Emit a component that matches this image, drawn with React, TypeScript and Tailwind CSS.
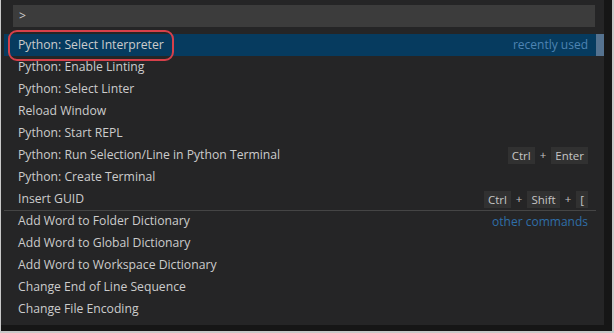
import React from "react";

type Item = { label: string; keys?: string[] };

const top: Item[] = [
  { label: "Python: Enable Linting" },
  { label: "Python: Select Linter" },
  { label: "Reload Window" },
  { label: "Python: Start REPL" },
  { label: "Python: Run Selection/Line in Python Terminal", keys: ["Ctrl", "Enter"] },
  { label: "Python: Create Terminal" },
  { label: "Insert GUID", keys: ["Ctrl", "Shift", "["] },
];

const rest: Item[] = [
  { label: "Add Word to Global Dictionary" },
  { label: "Add Word to Workspace Dictionary" },
  { label: "Change End of Line Sequence" },
  { label: "Change File Encoding" },
];

const Keys = ({ keys }: { keys: string[] }) => (
  <div className="flex items-center gap-[5px] text-[11.5px] text-[#c5c5c5]">
    {keys.map((k, i) => (
      <React.Fragment key={k}>
        {i > 0 && <span>+</span>}
        <span className="bg-[#313131] px-[4px] leading-[17px]">{k}</span>
      </React.Fragment>
    ))}
  </div>
);

const Row = ({ item }: { item: Item }) => (
  <div className="flex h-[22px] items-center justify-between pl-[14px] pr-[8px] text-[#cccccc]">
    <span>{item.label}</span>
    {item.keys && <Keys keys={item.keys} />}
  </div>
);

export default function App() {
  return (
    <div
      className="flex h-[333px] w-[614px] flex-col bg-[#c9c9c9] pb-[2px] pl-[1px] pr-[2px] text-[12.2px]"
      style={{ fontFamily: '"Open Sans", "Noto Sans", sans-serif' }}
    >
      <div className="flex flex-1 flex-col bg-[#161616] pb-[6px] pr-[8px]">
        <div className="relative flex flex-1 flex-col bg-[#252526] pl-[3px]">
          <div className="px-[9px] pb-[7px] pt-[5px]">
            <div className="flex h-[22px] items-center bg-[#3c3c3c] px-[6px] text-[#cccccc]">&gt;</div>
          </div>
          <div className="flex flex-1 flex-col pr-[8px]">
            <div className="relative flex h-[22px] items-center justify-between bg-[#063b5f] pl-[14px] pr-[8px] text-[#cccccc]">
              <span>Python: Select Interpreter</span>
              <span className="text-[12px] text-[#4e84b3]">recently used</span>
              <div className="absolute left-[4px] top-[-4px] h-[31px] w-[166px] rounded-[9px] border-2 border-[#d6404a]" />
            </div>
            {top.map((it) => (
              <Row key={it.label} item={it} />
            ))}
            <div className="flex h-[22px] items-center justify-between border-t border-[#454545] pl-[14px] pr-[8px] text-[#cccccc]">
              <span>Add Word to Folder Dictionary</span>
              <span className="text-[12px] text-[#2f6ea8]">other commands</span>
            </div>
            {rest.map((it) => (
              <Row key={it.label} item={it} />
            ))}
          </div>
          <div className="absolute right-0 top-[34px] h-[22px] w-[8px] bg-[#55728f]" />
        </div>
      </div>
    </div>
  );
}
